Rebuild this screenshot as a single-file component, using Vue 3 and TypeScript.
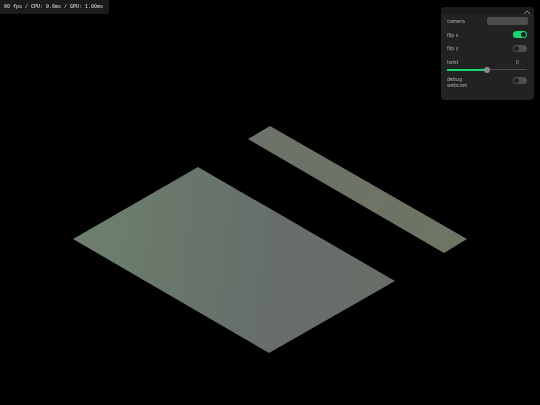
<template>
  <div class="scene">
    <svg class="planes" viewBox="0 0 540 405" width="540" height="405">
      <defs>
        <linearGradient id="bigFill" gradientUnits="userSpaceOnUse" x1="73" y1="239" x2="395" y2="281">
          <stop offset="0" stop-color="#708270" />
          <stop offset="0.3" stop-color="#6b796d" />
          <stop offset="0.65" stop-color="#686f6d" />
          <stop offset="1" stop-color="#6a716a" />
        </linearGradient>
        <linearGradient id="stripFill" gradientUnits="userSpaceOnUse" x1="248" y1="132" x2="467" y2="246">
          <stop offset="0" stop-color="#6f746c" />
          <stop offset="1" stop-color="#717765" />
        </linearGradient>
        <pattern id="grain" width="2" height="2" patternUnits="userSpaceOnUse">
          <rect x="0" y="0" width="1" height="1" fill="#000" opacity="0.035" />
          <rect x="1" y="1" width="1" height="1" fill="#000" opacity="0.035" />
        </pattern>
      </defs>
      <polygon v-for="p in planes" :key="p.id" :points="p.points" :fill="p.fill" />
      <polygon v-for="p in planes" :key="p.id + '-grain'" :points="p.points" fill="url(#grain)" />
    </svg>

    <div class="stats">60 fps / CPU: 0.6ms / GPU: 1.00ms</div>

    <div class="panel">
      <div class="panel-head">
        <svg class="chevron" width="8" height="5" viewBox="0 0 8 5">
          <path d="M1 4 L4 1 L7 4" fill="none" stroke="#8d8d8d" stroke-width="1" />
        </svg>
      </div>
      <div class="row">
        <span class="label">camera</span>
        <div class="select"></div>
      </div>
      <div class="row">
        <span class="label">flip x</span>
        <div class="toggle on"><i></i></div>
      </div>
      <div class="row">
        <span class="label">flip y</span>
        <div class="toggle"><i></i></div>
      </div>
      <div class="slider-row">
        <div class="slider-top">
          <span class="label">twist</span>
          <span class="label">{{ twist }}</span>
        </div>
        <div class="track">
          <div class="track-fill" :style="{ width: twistPct + '%' }"></div>
          <div class="thumb" :style="{ left: twistPct + '%' }"></div>
        </div>
      </div>
      <div class="row tall">
        <span class="label">debug<br />webcam</span>
        <div class="toggle"><i></i></div>
      </div>
    </div>
  </div>
</template>

<script setup lang="ts">
import { ref, computed } from 'vue'

const twist = ref(0)
const twistPct = computed(() => ((twist.value + 1) / 2) * 100)

const planes = [
  { id: 'big', points: '198,167 395,281 269,353 73,239', fill: 'url(#bigFill)' },
  { id: 'strip', points: '270,126 467,239 444,253 248,139', fill: 'url(#stripFill)' }
]
</script>

<style>
html, body {
  margin: 0;
  background: #000;
}
</style>

<style scoped>
.scene {
  position: relative;
  width: 540px;
  height: 405px;
  background: #000;
  overflow: hidden;
  font-family: "Inter", "Liberation Sans", sans-serif;
}

.planes {
  position: absolute;
  left: 0;
  top: 0;
  filter: blur(0.3px);
}

.stats {
  position: absolute;
  left: 0;
  top: 0;
  width: 109px;
  height: 14px;
  box-sizing: border-box;
  padding-left: 4px;
  line-height: 14px;
  background: #1b1b1b;
  color: #bcbcbc;
  font-family: "Liberation Mono", monospace;
  font-size: 5px;
  font-weight: 700;
  white-space: nowrap;
  filter: blur(0.25px);
}

.panel {
  position: absolute;
  left: 441px;
  top: 7px;
  width: 93px;
  height: 93px;
  border-radius: 4px;
  background: #222;
  color: #aaa;
  font-size: 5px;
  line-height: 6px;
}

.label {
  filter: blur(0.25px);
}

.panel-head {
  height: 7px;
  background: #1b1b1b;
  border-radius: 4px 4px 0 0;
  display: flex;
  justify-content: flex-end;
  align-items: center;
  padding-right: 3px;
}

.chevron {
  margin-top: 3px;
}

.row {
  height: 13.7px;
  display: flex;
  justify-content: space-between;
  align-items: center;
  padding: 0 6px 0 6px;
}

.row.tall {
  height: 16px;
  margin-top: 6px;
  align-items: flex-start;
}

.select {
  width: 41px;
  height: 8px;
  border-radius: 2px;
  background: #4c4c4c;
}

.toggle {
  position: relative;
  width: 13.5px;
  height: 7px;
  border-radius: 3.5px;
  background: #4e4e4e;
  margin-right: 1.5px;
}

.tall .toggle {
  margin-top: 0.5px;
}

.toggle i {
  position: absolute;
  left: 1px;
  top: 1px;
  width: 5px;
  height: 5px;
  border-radius: 50%;
  background: #222;
}

.toggle.on {
  background: #1bd672;
}

.toggle.on i {
  left: 7.5px;
}

.slider-row {
  padding: 0 6px;
  margin-top: 4px;
}

.slider-top {
  display: flex;
  justify-content: space-between;
  height: 8px;
  padding-right: 9px;
}

.track {
  position: relative;
  height: 1px;
  margin-top: 2px;
  width: 80px;
  background: #4c4c4c;
}

.track-fill {
  height: 2px;
  background: #1bd672;
}

.thumb {
  position: absolute;
  top: -2px;
  width: 6px;
  height: 6px;
  margin-left: -3px;
  border-radius: 50%;
  background: #8a8a8a;
}
</style>
